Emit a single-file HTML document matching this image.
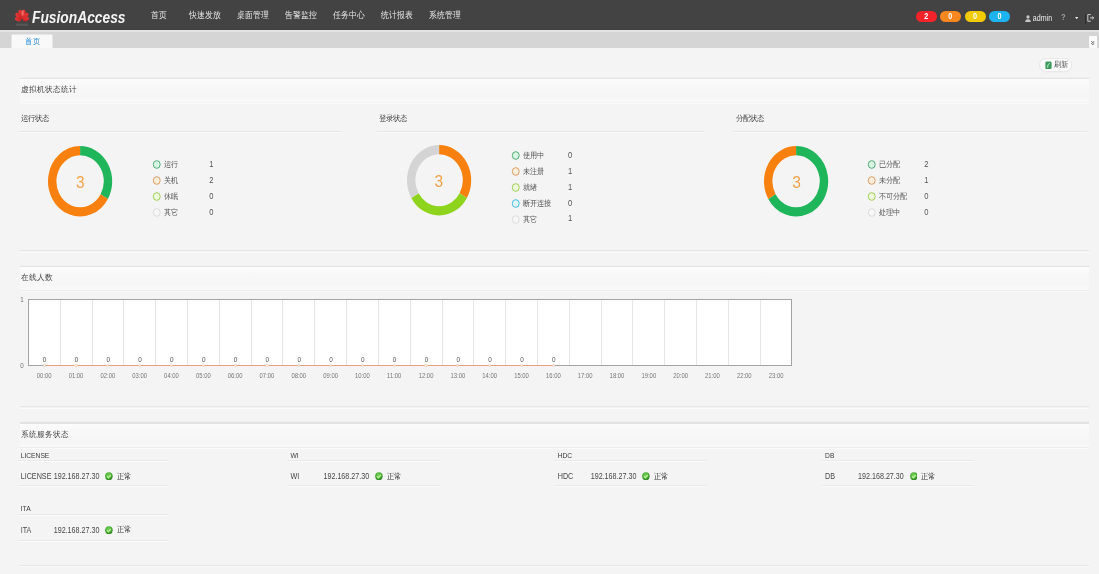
<!DOCTYPE html>
<html><head><meta charset="utf-8"><style>
html,body{margin:0;padding:0;width:1099px;height:574px;overflow:hidden;background:#f4f4f4;font-family:"Liberation Sans",sans-serif}
</style></head><body><div style="position:absolute;left:0;top:0;width:1099px;height:574px;overflow:hidden;will-change:transform;background:#f4f4f4">
<div style="position:absolute;left:0px;top:0px;width:1099px;height:30px;background:#434343"></div>
<div style="position:absolute;left:0px;top:30px;width:1099px;height:18px;background:#d5d5d5"></div>
<div style="position:absolute;left:0px;top:30px;width:1099px;height:1.5px;background:#e4e4e4"></div>
<div style="position:absolute;left:0px;top:48px;width:1099px;height:526px;background:#f4f4f4"></div>
<svg style="position:absolute;left:14.2px;top:8px" width="16" height="20" viewBox="0 0 16 20">
<defs><linearGradient id="lg" x1="0" y1="0" x2="1" y2="1"><stop offset="0" stop-color="#f04040"/><stop offset="1" stop-color="#c01c1c"/></linearGradient></defs>
<g fill="url(#lg)">
<ellipse cx="6.6" cy="6.2" rx="2.2" ry="4.6" transform="rotate(-10 6.6 6.2)"/>
<ellipse cx="9.4" cy="6.2" rx="2.2" ry="4.6" transform="rotate(10 9.4 6.2)"/>
<ellipse cx="4.6" cy="8.4" rx="2.1" ry="4.2" transform="rotate(-38 4.6 8.4)"/>
<ellipse cx="11.4" cy="8.4" rx="2.1" ry="4.2" transform="rotate(38 11.4 8.4)"/>
<ellipse cx="3.9" cy="11.3" rx="1.8" ry="3.2" transform="rotate(-68 3.9 11.3)"/>
<ellipse cx="12.1" cy="11.3" rx="1.8" ry="3.2" transform="rotate(68 12.1 11.3)"/>
</g>
<ellipse cx="8.6" cy="5" rx="1.2" ry="3" fill="#ff8a80" opacity="0.6"/>
<rect x="2.2" y="15.5" width="11.6" height="2.4" fill="#6e6a6a" opacity="0.5"/>
</svg>
<div style="position:absolute;left:32px;top:7.7px;height:20px;line-height:20px;font-size:13.8px;font-weight:bold;font-style:italic;color:#f4f4f4;transform:scaleY(1.15);transform-origin:0 50%">FusionAccess</div>
<div style="position:absolute;left:150.7px;top:6.0px;height:20px;line-height:20px;font-size:8.1px;color:#e8e8e8;white-space:nowrap;transform:scaleY(1.15);transform-origin:0 50%;">首页</div>
<div style="position:absolute;left:189.2px;top:6.0px;height:20px;line-height:20px;font-size:8.1px;color:#e8e8e8;white-space:nowrap;transform:scaleY(1.15);transform-origin:0 50%;">快速发放</div>
<div style="position:absolute;left:237.2px;top:6.0px;height:20px;line-height:20px;font-size:8.1px;color:#e8e8e8;white-space:nowrap;transform:scaleY(1.15);transform-origin:0 50%;">桌面管理</div>
<div style="position:absolute;left:285.2px;top:6.0px;height:20px;line-height:20px;font-size:8.1px;color:#e8e8e8;white-space:nowrap;transform:scaleY(1.15);transform-origin:0 50%;">告警监控</div>
<div style="position:absolute;left:332.7px;top:6.0px;height:20px;line-height:20px;font-size:8.1px;color:#e8e8e8;white-space:nowrap;transform:scaleY(1.15);transform-origin:0 50%;">任务中心</div>
<div style="position:absolute;left:380.7px;top:6.0px;height:20px;line-height:20px;font-size:8.1px;color:#e8e8e8;white-space:nowrap;transform:scaleY(1.15);transform-origin:0 50%;">统计报表</div>
<div style="position:absolute;left:428.7px;top:6.0px;height:20px;line-height:20px;font-size:8.1px;color:#e8e8e8;white-space:nowrap;transform:scaleY(1.15);transform-origin:0 50%;">系统管理</div>
<div style="position:absolute;left:915.5px;top:11.1px;width:21.5px;height:11px;border-radius:5.5px;background:#f5232a"></div>
<div style="position:absolute;left:926.25px;top:6.899999999999999px;height:20px;line-height:20px;font-size:7.2px;color:#fff;white-space:nowrap;transform:translateX(-50%) scaleY(1.15);transform-origin:0 50%;font-weight:bold">2</div>
<div style="position:absolute;left:940px;top:11.1px;width:20.5px;height:11px;border-radius:5.5px;background:#f7871f"></div>
<div style="position:absolute;left:950.25px;top:6.899999999999999px;height:20px;line-height:20px;font-size:7.2px;color:#fff;white-space:nowrap;transform:translateX(-50%) scaleY(1.15);transform-origin:0 50%;font-weight:bold">0</div>
<div style="position:absolute;left:964.5px;top:11.1px;width:21px;height:11px;border-radius:5.5px;background:#f2cb00"></div>
<div style="position:absolute;left:975.0px;top:6.899999999999999px;height:20px;line-height:20px;font-size:7.2px;color:#fff;white-space:nowrap;transform:translateX(-50%) scaleY(1.15);transform-origin:0 50%;font-weight:bold">0</div>
<div style="position:absolute;left:989px;top:11.1px;width:21px;height:11px;border-radius:5.5px;background:#1db3ee"></div>
<div style="position:absolute;left:999.5px;top:6.899999999999999px;height:20px;line-height:20px;font-size:7.2px;color:#fff;white-space:nowrap;transform:translateX(-50%) scaleY(1.15);transform-origin:0 50%;font-weight:bold">0</div>
<svg style="position:absolute;left:1024.8px;top:14.6px" width="6" height="7.4" viewBox="0 0 6 7.4">
<ellipse cx="3" cy="2" rx="1.6" ry="1.8" fill="#c8c8c8"/><path d="M0.2 7.2 C0.2 4.9 1.3 4.2 3 4.2 C4.7 4.2 5.8 4.9 5.8 7.2Z" fill="#c8c8c8"/></svg>
<div style="position:absolute;left:1032.8px;top:8.8px;height:20px;line-height:20px;font-size:7.1px;color:#ececec;white-space:nowrap;transform:scaleY(1.15);transform-origin:0 50%;">admin</div>
<div style="position:absolute;left:1061px;top:7.600000000000001px;height:20px;line-height:20px;font-size:7.6px;color:#9c9c9c;white-space:nowrap;transform:scaleY(1.15);transform-origin:0 50%;font-weight:bold">?</div>
<svg style="position:absolute;left:1075px;top:16.8px" width="3.4" height="2.4" viewBox="0 0 3.4 2.4"><path d="M0 0.1 H3.4 L1.7 2.3Z" fill="#e6e6e6"/></svg>
<div style="position:absolute;left:1085px;top:13.5px;width:0.8px;height:10.3px;background:#2e2e2e"></div>
<svg style="position:absolute;left:1087.4px;top:14px" width="8" height="8" viewBox="0 0 8 8">
<path d="M3.8 0.6 H0.8 V7.2 H3.8" fill="none" stroke="#cccccc" stroke-width="1"/>
<path d="M3 3.9 H6.6 M5.2 2.5 L6.8 3.9 L5.2 5.3" fill="none" stroke="#cccccc" stroke-width="1"/></svg>
<div style="position:absolute;left:11.4px;top:33.6px;width:41.2px;height:14.3px;background:#f9f9f9;border-radius:2px 2px 0 0;box-sizing:border-box;border:1px solid #e6e6e6;border-bottom:none"></div>
<div style="position:absolute;left:24.8px;top:31.6px;height:20px;line-height:20px;font-size:7.5px;color:#1f88d4;white-space:nowrap;transform:scaleY(1.1);transform-origin:0 50%;">首页</div>
<div style="position:absolute;left:1088.6px;top:36px;width:8px;height:11.8px;background:#fbfbfb;border-radius:1px"></div>
<svg style="position:absolute;left:1091px;top:40.8px" width="3.6" height="4.2" viewBox="0 0 3.6 4.2">
<path d="M0.3 0.3 L1.8 1.6 L3.3 0.3 M0.3 2.3 L1.8 3.7 L3.3 2.3" fill="none" stroke="#444" stroke-width="0.9"/></svg>
<div style="position:absolute;left:1039.3px;top:57.8px;width:32.9px;height:14.7px;box-sizing:border-box;background:#fcfcfc;border:0.8px solid #e8e8e8;border-radius:7.4px;box-shadow:0 0.5px 1px rgba(0,0,0,0.04)"></div>
<svg style="position:absolute;left:1045px;top:60.6px" width="7" height="8.4" viewBox="0 0 7 8.4">
<path d="M1.2 0.6 H5.2 Q6.6 0.6 6.6 2 V6.8 Q6.6 8.2 5.2 8.2 H1.8 Q0.4 8.2 0.4 6.8 V1.6Z" fill="#3d9a5c"/>
<path d="M4.8 2.2 Q2.2 3.2 2.6 6.6" fill="none" stroke="#b8f0c8" stroke-width="1"/></svg>
<div style="position:absolute;left:1053.6px;top:54.599999999999994px;height:20px;line-height:20px;font-size:7.3px;color:#505050;white-space:nowrap;transform:scaleY(1.1);transform-origin:0 50%;">刷新</div>
<div style="position:absolute;left:19.5px;top:77px;width:1069.5px;height:1px;background:#f0f0f0"></div>
<div style="position:absolute;left:19.5px;top:78px;width:1069.5px;height:1.4px;background:#e3e3e3"></div>
<div style="position:absolute;left:19.5px;top:79.4px;width:1069.5px;height:23.1px;background:linear-gradient(#fcfcfc,#f8f8f8 30%,#f6f6f6 75%,#f9f9f9)"></div>
<div style="position:absolute;left:19.5px;top:102.5px;width:1069.5px;height:0.9px;background:#ececec"></div>
<div style="position:absolute;left:19.5px;top:103.4px;width:1069.5px;height:0.8px;background:#fafafa"></div>
<div style="position:absolute;left:19.5px;top:250.2px;width:1069.5px;height:1.3px;background:#e6e6e6"></div>
<div style="position:absolute;left:19.5px;top:251.6px;width:1069.5px;height:1.0px;background:#fafafa"></div>
<div style="position:absolute;left:20.5px;top:80.3px;height:20px;line-height:20px;font-size:8.0px;color:#444;white-space:nowrap;transform:scaleY(1.05);transform-origin:0 50%;">虚拟机状态统计</div>
<div style="position:absolute;left:19.5px;top:264.5px;width:1069.5px;height:1px;background:#f0f0f0"></div>
<div style="position:absolute;left:19.5px;top:265.5px;width:1069.5px;height:1.4px;background:#e3e3e3"></div>
<div style="position:absolute;left:19.5px;top:266.9px;width:1069.5px;height:23.1px;background:linear-gradient(#fcfcfc,#f8f8f8 30%,#f6f6f6 75%,#f9f9f9)"></div>
<div style="position:absolute;left:19.5px;top:290px;width:1069.5px;height:0.9px;background:#ececec"></div>
<div style="position:absolute;left:19.5px;top:290.9px;width:1069.5px;height:0.8px;background:#fafafa"></div>
<div style="position:absolute;left:19.5px;top:406.2px;width:1069.5px;height:1.3px;background:#e6e6e6"></div>
<div style="position:absolute;left:19.5px;top:407.59999999999997px;width:1069.5px;height:1.0px;background:#fafafa"></div>
<div style="position:absolute;left:20.5px;top:268.0px;height:20px;line-height:20px;font-size:8.0px;color:#444;white-space:nowrap;transform:scaleY(1.05);transform-origin:0 50%;">在线人数</div>
<div style="position:absolute;left:19.5px;top:421.2px;width:1069.5px;height:1px;background:#f0f0f0"></div>
<div style="position:absolute;left:19.5px;top:422.2px;width:1069.5px;height:1.4px;background:#e3e3e3"></div>
<div style="position:absolute;left:19.5px;top:423.59999999999997px;width:1069.5px;height:23.400000000000013px;background:linear-gradient(#fcfcfc,#f8f8f8 30%,#f6f6f6 75%,#f9f9f9)"></div>
<div style="position:absolute;left:19.5px;top:447px;width:1069.5px;height:0.9px;background:#ececec"></div>
<div style="position:absolute;left:19.5px;top:447.9px;width:1069.5px;height:0.8px;background:#fafafa"></div>
<div style="position:absolute;left:19.5px;top:565px;width:1069.5px;height:1.3px;background:#e6e6e6"></div>
<div style="position:absolute;left:19.5px;top:566.4px;width:1069.5px;height:1.0px;background:#fafafa"></div>
<div style="position:absolute;left:20.5px;top:424.9px;height:20px;line-height:20px;font-size:8.0px;color:#444;white-space:nowrap;transform:scaleY(1.05);transform-origin:0 50%;">系统服务状态</div>
<div style="position:absolute;left:20.5px;top:109.0px;height:20px;line-height:20px;font-size:7.1px;color:#444;white-space:nowrap;transform:scaleY(1.08);transform-origin:0 50%;">运行状态</div>
<div style="position:absolute;left:18.2px;top:130.6px;width:324px;height:0.9px;background:#e6e6e6"></div>
<div style="position:absolute;left:18.2px;top:131.5px;width:324px;height:0.7px;background:#fafafa"></div>
<div style="position:absolute;left:378.90000000000003px;top:109.0px;height:20px;line-height:20px;font-size:7.1px;color:#444;white-space:nowrap;transform:scaleY(1.08);transform-origin:0 50%;">登录状态</div>
<div style="position:absolute;left:376.6px;top:130.6px;width:328px;height:0.9px;background:#e6e6e6"></div>
<div style="position:absolute;left:376.6px;top:131.5px;width:328px;height:0.7px;background:#fafafa"></div>
<div style="position:absolute;left:736.1999999999999px;top:109.0px;height:20px;line-height:20px;font-size:7.1px;color:#444;white-space:nowrap;transform:scaleY(1.08);transform-origin:0 50%;">分配状态</div>
<div style="position:absolute;left:733.9px;top:130.6px;width:353px;height:0.9px;background:#e6e6e6"></div>
<div style="position:absolute;left:733.9px;top:131.5px;width:353px;height:0.7px;background:#fafafa"></div>
<svg style="position:absolute;left:47.199999999999996px;top:144.89999999999998px" width="66.2" height="72.6" viewBox="-33.1 -33.1 66.2 66.2" preserveAspectRatio="none"><path d="M0.000 -27.900 A27.900000000000002 27.900000000000002 0 0 1 24.162 13.950" fill="none" stroke="#1fb55a" stroke-width="8.4"/><path d="M24.162 13.950 A27.900000000000002 27.900000000000002 0 1 1 -0.000 -27.900" fill="none" stroke="#f7800f" stroke-width="8.4"/></svg>
<div style="position:absolute;left:80.3px;top:171.7px;height:20px;line-height:20px;font-size:15.5px;color:#f2a24c;white-space:nowrap;transform:translateX(-50%) scaleY(1.1);transform-origin:0 50%;">3</div>
<svg style="position:absolute;left:405.59999999999997px;top:143.89999999999998px" width="66.2" height="72.6" viewBox="-33.1 -33.1 66.2 66.2" preserveAspectRatio="none"><path d="M0.000 -27.900 A27.900000000000002 27.900000000000002 0 0 1 24.162 13.950" fill="none" stroke="#f7800f" stroke-width="8.4"/><path d="M24.162 13.950 A27.900000000000002 27.900000000000002 0 0 1 -24.162 13.950" fill="none" stroke="#8fd41c" stroke-width="8.4"/><path d="M-24.162 13.950 A27.900000000000002 27.900000000000002 0 0 1 -0.000 -27.900" fill="none" stroke="#d4d4d4" stroke-width="8.4"/></svg>
<div style="position:absolute;left:438.7px;top:170.7px;height:20px;line-height:20px;font-size:15.5px;color:#f2a24c;white-space:nowrap;transform:translateX(-50%) scaleY(1.1);transform-origin:0 50%;">3</div>
<svg style="position:absolute;left:763.4px;top:144.8px" width="66.2" height="72.6" viewBox="-33.1 -33.1 66.2 66.2" preserveAspectRatio="none"><path d="M0.000 -27.900 A27.900000000000002 27.900000000000002 0 1 1 -24.162 13.950" fill="none" stroke="#1fb55a" stroke-width="8.4"/><path d="M-24.162 13.950 A27.900000000000002 27.900000000000002 0 0 1 -0.000 -27.900" fill="none" stroke="#f7800f" stroke-width="8.4"/></svg>
<div style="position:absolute;left:796.5px;top:171.6px;height:20px;line-height:20px;font-size:15.5px;color:#f2a24c;white-space:nowrap;transform:translateX(-50%) scaleY(1.1);transform-origin:0 50%;">3</div>
<svg style="position:absolute;left:151.9px;top:158.8px;overflow:visible" width="10" height="11" viewBox="0 0 10 11"><ellipse cx="4.75" cy="5.5" rx="3.45" ry="3.85" fill="#d9f5e4" stroke="#4aa872" stroke-width="0.95"/></svg>
<div style="position:absolute;left:163.70000000000002px;top:154.8px;height:20px;line-height:20px;font-size:7.1px;color:#555;white-space:nowrap;transform:scaleY(1.12);transform-origin:0 50%;">运行</div>
<div style="position:absolute;left:209.2px;top:154.70000000000002px;height:20px;line-height:20px;font-size:7.6px;color:#555;white-space:nowrap;transform:scaleY(1.12);transform-origin:0 50%;">1</div>
<svg style="position:absolute;left:151.9px;top:174.8px;overflow:visible" width="10" height="11" viewBox="0 0 10 11"><ellipse cx="4.75" cy="5.5" rx="3.45" ry="3.85" fill="#fbeedd" stroke="#d99a5e" stroke-width="0.95"/></svg>
<div style="position:absolute;left:163.70000000000002px;top:170.8px;height:20px;line-height:20px;font-size:7.1px;color:#555;white-space:nowrap;transform:scaleY(1.12);transform-origin:0 50%;">关机</div>
<div style="position:absolute;left:209.2px;top:170.70000000000002px;height:20px;line-height:20px;font-size:7.6px;color:#555;white-space:nowrap;transform:scaleY(1.12);transform-origin:0 50%;">2</div>
<svg style="position:absolute;left:151.9px;top:190.7px;overflow:visible" width="10" height="11" viewBox="0 0 10 11"><ellipse cx="4.75" cy="5.5" rx="3.45" ry="3.85" fill="#eef8dc" stroke="#9ccc50" stroke-width="0.95"/></svg>
<div style="position:absolute;left:163.70000000000002px;top:186.7px;height:20px;line-height:20px;font-size:7.1px;color:#555;white-space:nowrap;transform:scaleY(1.12);transform-origin:0 50%;">休眠</div>
<div style="position:absolute;left:209.2px;top:186.6px;height:20px;line-height:20px;font-size:7.6px;color:#555;white-space:nowrap;transform:scaleY(1.12);transform-origin:0 50%;">0</div>
<svg style="position:absolute;left:151.9px;top:207.0px;overflow:visible" width="10" height="11" viewBox="0 0 10 11"><ellipse cx="4.75" cy="5.5" rx="3.45" ry="3.85" fill="#f7f7f7" stroke="#dadada" stroke-width="0.95"/></svg>
<div style="position:absolute;left:163.70000000000002px;top:203.0px;height:20px;line-height:20px;font-size:7.1px;color:#555;white-space:nowrap;transform:scaleY(1.12);transform-origin:0 50%;">其它</div>
<div style="position:absolute;left:209.2px;top:202.9px;height:20px;line-height:20px;font-size:7.6px;color:#555;white-space:nowrap;transform:scaleY(1.12);transform-origin:0 50%;">0</div>
<svg style="position:absolute;left:510.8px;top:149.9px;overflow:visible" width="10" height="11" viewBox="0 0 10 11"><ellipse cx="4.75" cy="5.5" rx="3.45" ry="3.85" fill="#d9f5e4" stroke="#4aa872" stroke-width="0.95"/></svg>
<div style="position:absolute;left:522.6px;top:145.9px;height:20px;line-height:20px;font-size:7.1px;color:#555;white-space:nowrap;transform:scaleY(1.12);transform-origin:0 50%;">使用中</div>
<div style="position:absolute;left:568.1px;top:145.8px;height:20px;line-height:20px;font-size:7.6px;color:#555;white-space:nowrap;transform:scaleY(1.12);transform-origin:0 50%;">0</div>
<svg style="position:absolute;left:510.8px;top:165.9px;overflow:visible" width="10" height="11" viewBox="0 0 10 11"><ellipse cx="4.75" cy="5.5" rx="3.45" ry="3.85" fill="#fbeedd" stroke="#d99a5e" stroke-width="0.95"/></svg>
<div style="position:absolute;left:522.6px;top:161.9px;height:20px;line-height:20px;font-size:7.1px;color:#555;white-space:nowrap;transform:scaleY(1.12);transform-origin:0 50%;">未注册</div>
<div style="position:absolute;left:568.1px;top:161.8px;height:20px;line-height:20px;font-size:7.6px;color:#555;white-space:nowrap;transform:scaleY(1.12);transform-origin:0 50%;">1</div>
<svg style="position:absolute;left:510.8px;top:181.8px;overflow:visible" width="10" height="11" viewBox="0 0 10 11"><ellipse cx="4.75" cy="5.5" rx="3.45" ry="3.85" fill="#eef8dc" stroke="#9ccc50" stroke-width="0.95"/></svg>
<div style="position:absolute;left:522.6px;top:177.8px;height:20px;line-height:20px;font-size:7.1px;color:#555;white-space:nowrap;transform:scaleY(1.12);transform-origin:0 50%;">就绪</div>
<div style="position:absolute;left:568.1px;top:177.70000000000002px;height:20px;line-height:20px;font-size:7.6px;color:#555;white-space:nowrap;transform:scaleY(1.12);transform-origin:0 50%;">1</div>
<svg style="position:absolute;left:510.8px;top:197.6px;overflow:visible" width="10" height="11" viewBox="0 0 10 11"><ellipse cx="4.75" cy="5.5" rx="3.45" ry="3.85" fill="#dff4fb" stroke="#3cb8dc" stroke-width="0.95"/></svg>
<div style="position:absolute;left:522.6px;top:193.6px;height:20px;line-height:20px;font-size:7.1px;color:#555;white-space:nowrap;transform:scaleY(1.12);transform-origin:0 50%;">断开连接</div>
<div style="position:absolute;left:568.1px;top:193.5px;height:20px;line-height:20px;font-size:7.6px;color:#555;white-space:nowrap;transform:scaleY(1.12);transform-origin:0 50%;">0</div>
<svg style="position:absolute;left:510.8px;top:213.5px;overflow:visible" width="10" height="11" viewBox="0 0 10 11"><ellipse cx="4.75" cy="5.5" rx="3.45" ry="3.85" fill="#f7f7f7" stroke="#dadada" stroke-width="0.95"/></svg>
<div style="position:absolute;left:522.6px;top:209.5px;height:20px;line-height:20px;font-size:7.1px;color:#555;white-space:nowrap;transform:scaleY(1.12);transform-origin:0 50%;">其它</div>
<div style="position:absolute;left:568.1px;top:209.4px;height:20px;line-height:20px;font-size:7.6px;color:#555;white-space:nowrap;transform:scaleY(1.12);transform-origin:0 50%;">1</div>
<svg style="position:absolute;left:866.9px;top:159.0px;overflow:visible" width="10" height="11" viewBox="0 0 10 11"><ellipse cx="4.75" cy="5.5" rx="3.45" ry="3.85" fill="#d9f5e4" stroke="#4aa872" stroke-width="0.95"/></svg>
<div style="position:absolute;left:878.6999999999999px;top:155.0px;height:20px;line-height:20px;font-size:7.1px;color:#555;white-space:nowrap;transform:scaleY(1.12);transform-origin:0 50%;">已分配</div>
<div style="position:absolute;left:924.1999999999999px;top:154.9px;height:20px;line-height:20px;font-size:7.6px;color:#555;white-space:nowrap;transform:scaleY(1.12);transform-origin:0 50%;">2</div>
<svg style="position:absolute;left:866.9px;top:174.9px;overflow:visible" width="10" height="11" viewBox="0 0 10 11"><ellipse cx="4.75" cy="5.5" rx="3.45" ry="3.85" fill="#fbeedd" stroke="#d99a5e" stroke-width="0.95"/></svg>
<div style="position:absolute;left:878.6999999999999px;top:170.9px;height:20px;line-height:20px;font-size:7.1px;color:#555;white-space:nowrap;transform:scaleY(1.12);transform-origin:0 50%;">未分配</div>
<div style="position:absolute;left:924.1999999999999px;top:170.8px;height:20px;line-height:20px;font-size:7.6px;color:#555;white-space:nowrap;transform:scaleY(1.12);transform-origin:0 50%;">1</div>
<svg style="position:absolute;left:866.9px;top:190.8px;overflow:visible" width="10" height="11" viewBox="0 0 10 11"><ellipse cx="4.75" cy="5.5" rx="3.45" ry="3.85" fill="#eef8dc" stroke="#9ccc50" stroke-width="0.95"/></svg>
<div style="position:absolute;left:878.6999999999999px;top:186.8px;height:20px;line-height:20px;font-size:7.1px;color:#555;white-space:nowrap;transform:scaleY(1.12);transform-origin:0 50%;">不可分配</div>
<div style="position:absolute;left:924.1999999999999px;top:186.70000000000002px;height:20px;line-height:20px;font-size:7.6px;color:#555;white-space:nowrap;transform:scaleY(1.12);transform-origin:0 50%;">0</div>
<svg style="position:absolute;left:866.9px;top:207.1px;overflow:visible" width="10" height="11" viewBox="0 0 10 11"><ellipse cx="4.75" cy="5.5" rx="3.45" ry="3.85" fill="#f7f7f7" stroke="#dadada" stroke-width="0.95"/></svg>
<div style="position:absolute;left:878.6999999999999px;top:203.1px;height:20px;line-height:20px;font-size:7.1px;color:#555;white-space:nowrap;transform:scaleY(1.12);transform-origin:0 50%;">处理中</div>
<div style="position:absolute;left:924.1999999999999px;top:203.0px;height:20px;line-height:20px;font-size:7.6px;color:#555;white-space:nowrap;transform:scaleY(1.12);transform-origin:0 50%;">0</div>
<div style="position:absolute;left:28.3px;top:298.7px;width:763.7px;height:67.30000000000001px;background:#fff;box-sizing:border-box;border:1.3px solid #a4a4a4"></div>
<div style="position:absolute;left:59.72083333333334px;top:300.0px;width:0.8px;height:64.70000000000002px;background:#e6e6e6"></div>
<div style="position:absolute;left:91.54166666666667px;top:300.0px;width:0.8px;height:64.70000000000002px;background:#e6e6e6"></div>
<div style="position:absolute;left:123.3625px;top:300.0px;width:0.8px;height:64.70000000000002px;background:#e6e6e6"></div>
<div style="position:absolute;left:155.18333333333334px;top:300.0px;width:0.8px;height:64.70000000000002px;background:#e6e6e6"></div>
<div style="position:absolute;left:187.0041666666667px;top:300.0px;width:0.8px;height:64.70000000000002px;background:#e6e6e6"></div>
<div style="position:absolute;left:218.82500000000002px;top:300.0px;width:0.8px;height:64.70000000000002px;background:#e6e6e6"></div>
<div style="position:absolute;left:250.64583333333337px;top:300.0px;width:0.8px;height:64.70000000000002px;background:#e6e6e6"></div>
<div style="position:absolute;left:282.4666666666667px;top:300.0px;width:0.8px;height:64.70000000000002px;background:#e6e6e6"></div>
<div style="position:absolute;left:314.2875000000001px;top:300.0px;width:0.8px;height:64.70000000000002px;background:#e6e6e6"></div>
<div style="position:absolute;left:346.1083333333334px;top:300.0px;width:0.8px;height:64.70000000000002px;background:#e6e6e6"></div>
<div style="position:absolute;left:377.92916666666673px;top:300.0px;width:0.8px;height:64.70000000000002px;background:#e6e6e6"></div>
<div style="position:absolute;left:409.75000000000006px;top:300.0px;width:0.8px;height:64.70000000000002px;background:#e6e6e6"></div>
<div style="position:absolute;left:441.5708333333334px;top:300.0px;width:0.8px;height:64.70000000000002px;background:#e6e6e6"></div>
<div style="position:absolute;left:473.39166666666677px;top:300.0px;width:0.8px;height:64.70000000000002px;background:#e6e6e6"></div>
<div style="position:absolute;left:505.2125000000001px;top:300.0px;width:0.8px;height:64.70000000000002px;background:#e6e6e6"></div>
<div style="position:absolute;left:537.0333333333334px;top:300.0px;width:0.8px;height:64.70000000000002px;background:#e6e6e6"></div>
<div style="position:absolute;left:568.8541666666667px;top:300.0px;width:0.8px;height:64.70000000000002px;background:#e6e6e6"></div>
<div style="position:absolute;left:600.6750000000001px;top:300.0px;width:0.8px;height:64.70000000000002px;background:#e6e6e6"></div>
<div style="position:absolute;left:632.4958333333334px;top:300.0px;width:0.8px;height:64.70000000000002px;background:#e6e6e6"></div>
<div style="position:absolute;left:664.3166666666667px;top:300.0px;width:0.8px;height:64.70000000000002px;background:#e6e6e6"></div>
<div style="position:absolute;left:696.1375px;top:300.0px;width:0.8px;height:64.70000000000002px;background:#e6e6e6"></div>
<div style="position:absolute;left:727.9583333333334px;top:300.0px;width:0.8px;height:64.70000000000002px;background:#e6e6e6"></div>
<div style="position:absolute;left:759.7791666666667px;top:300.0px;width:0.8px;height:64.70000000000002px;background:#e6e6e6"></div>
<div style="position:absolute;left:20.3px;top:289.8px;height:20px;line-height:20px;font-size:6.2px;color:#707070;white-space:nowrap;transform:scaleY(1.15);transform-origin:0 50%;">1</div>
<div style="position:absolute;left:20.3px;top:356.2px;height:20px;line-height:20px;font-size:6.2px;color:#707070;white-space:nowrap;transform:scaleY(1.15);transform-origin:0 50%;">0</div>
<div style="position:absolute;left:44.21041666666667px;top:364.9px;width:509.1333333333333px;height:1.0px;background:#eaa27c"></div>
<div style="position:absolute;left:42.610416666666666px;top:363.84999999999997px;width:3.2px;height:3.2px;box-sizing:border-box;border:0.7px solid #f2cdb4;border-radius:50%;background:#fdf8f4"></div>
<div style="position:absolute;left:44.610416666666666px;top:349.7px;height:20px;line-height:20px;font-size:6.4px;color:#555;white-space:nowrap;transform:translateX(-50%) scaleY(1.15);transform-origin:0 50%;">0</div>
<div style="position:absolute;left:74.43125px;top:363.84999999999997px;width:3.2px;height:3.2px;box-sizing:border-box;border:0.7px solid #f2cdb4;border-radius:50%;background:#fdf8f4"></div>
<div style="position:absolute;left:76.43125px;top:349.7px;height:20px;line-height:20px;font-size:6.4px;color:#555;white-space:nowrap;transform:translateX(-50%) scaleY(1.15);transform-origin:0 50%;">0</div>
<div style="position:absolute;left:106.25208333333335px;top:363.84999999999997px;width:3.2px;height:3.2px;box-sizing:border-box;border:0.7px solid #f2cdb4;border-radius:50%;background:#fdf8f4"></div>
<div style="position:absolute;left:108.25208333333335px;top:349.7px;height:20px;line-height:20px;font-size:6.4px;color:#555;white-space:nowrap;transform:translateX(-50%) scaleY(1.15);transform-origin:0 50%;">0</div>
<div style="position:absolute;left:138.07291666666669px;top:363.84999999999997px;width:3.2px;height:3.2px;box-sizing:border-box;border:0.7px solid #f2cdb4;border-radius:50%;background:#fdf8f4"></div>
<div style="position:absolute;left:140.07291666666669px;top:349.7px;height:20px;line-height:20px;font-size:6.4px;color:#555;white-space:nowrap;transform:translateX(-50%) scaleY(1.15);transform-origin:0 50%;">0</div>
<div style="position:absolute;left:169.89375000000004px;top:363.84999999999997px;width:3.2px;height:3.2px;box-sizing:border-box;border:0.7px solid #f2cdb4;border-radius:50%;background:#fdf8f4"></div>
<div style="position:absolute;left:171.89375000000004px;top:349.7px;height:20px;line-height:20px;font-size:6.4px;color:#555;white-space:nowrap;transform:translateX(-50%) scaleY(1.15);transform-origin:0 50%;">0</div>
<div style="position:absolute;left:201.71458333333337px;top:363.84999999999997px;width:3.2px;height:3.2px;box-sizing:border-box;border:0.7px solid #f2cdb4;border-radius:50%;background:#fdf8f4"></div>
<div style="position:absolute;left:203.71458333333337px;top:349.7px;height:20px;line-height:20px;font-size:6.4px;color:#555;white-space:nowrap;transform:translateX(-50%) scaleY(1.15);transform-origin:0 50%;">0</div>
<div style="position:absolute;left:233.5354166666667px;top:363.84999999999997px;width:3.2px;height:3.2px;box-sizing:border-box;border:0.7px solid #f2cdb4;border-radius:50%;background:#fdf8f4"></div>
<div style="position:absolute;left:235.5354166666667px;top:349.7px;height:20px;line-height:20px;font-size:6.4px;color:#555;white-space:nowrap;transform:translateX(-50%) scaleY(1.15);transform-origin:0 50%;">0</div>
<div style="position:absolute;left:265.35625px;top:363.84999999999997px;width:3.2px;height:3.2px;box-sizing:border-box;border:0.7px solid #f2cdb4;border-radius:50%;background:#fdf8f4"></div>
<div style="position:absolute;left:267.35625px;top:349.7px;height:20px;line-height:20px;font-size:6.4px;color:#555;white-space:nowrap;transform:translateX(-50%) scaleY(1.15);transform-origin:0 50%;">0</div>
<div style="position:absolute;left:297.17708333333337px;top:363.84999999999997px;width:3.2px;height:3.2px;box-sizing:border-box;border:0.7px solid #f2cdb4;border-radius:50%;background:#fdf8f4"></div>
<div style="position:absolute;left:299.17708333333337px;top:349.7px;height:20px;line-height:20px;font-size:6.4px;color:#555;white-space:nowrap;transform:translateX(-50%) scaleY(1.15);transform-origin:0 50%;">0</div>
<div style="position:absolute;left:328.9979166666667px;top:363.84999999999997px;width:3.2px;height:3.2px;box-sizing:border-box;border:0.7px solid #f2cdb4;border-radius:50%;background:#fdf8f4"></div>
<div style="position:absolute;left:330.9979166666667px;top:349.7px;height:20px;line-height:20px;font-size:6.4px;color:#555;white-space:nowrap;transform:translateX(-50%) scaleY(1.15);transform-origin:0 50%;">0</div>
<div style="position:absolute;left:360.81875px;top:363.84999999999997px;width:3.2px;height:3.2px;box-sizing:border-box;border:0.7px solid #f2cdb4;border-radius:50%;background:#fdf8f4"></div>
<div style="position:absolute;left:362.81875px;top:349.7px;height:20px;line-height:20px;font-size:6.4px;color:#555;white-space:nowrap;transform:translateX(-50%) scaleY(1.15);transform-origin:0 50%;">0</div>
<div style="position:absolute;left:392.63958333333335px;top:363.84999999999997px;width:3.2px;height:3.2px;box-sizing:border-box;border:0.7px solid #f2cdb4;border-radius:50%;background:#fdf8f4"></div>
<div style="position:absolute;left:394.63958333333335px;top:349.7px;height:20px;line-height:20px;font-size:6.4px;color:#555;white-space:nowrap;transform:translateX(-50%) scaleY(1.15);transform-origin:0 50%;">0</div>
<div style="position:absolute;left:424.4604166666667px;top:363.84999999999997px;width:3.2px;height:3.2px;box-sizing:border-box;border:0.7px solid #f2cdb4;border-radius:50%;background:#fdf8f4"></div>
<div style="position:absolute;left:426.4604166666667px;top:349.7px;height:20px;line-height:20px;font-size:6.4px;color:#555;white-space:nowrap;transform:translateX(-50%) scaleY(1.15);transform-origin:0 50%;">0</div>
<div style="position:absolute;left:456.28125000000006px;top:363.84999999999997px;width:3.2px;height:3.2px;box-sizing:border-box;border:0.7px solid #f2cdb4;border-radius:50%;background:#fdf8f4"></div>
<div style="position:absolute;left:458.28125000000006px;top:349.7px;height:20px;line-height:20px;font-size:6.4px;color:#555;white-space:nowrap;transform:translateX(-50%) scaleY(1.15);transform-origin:0 50%;">0</div>
<div style="position:absolute;left:488.1020833333334px;top:363.84999999999997px;width:3.2px;height:3.2px;box-sizing:border-box;border:0.7px solid #f2cdb4;border-radius:50%;background:#fdf8f4"></div>
<div style="position:absolute;left:490.1020833333334px;top:349.7px;height:20px;line-height:20px;font-size:6.4px;color:#555;white-space:nowrap;transform:translateX(-50%) scaleY(1.15);transform-origin:0 50%;">0</div>
<div style="position:absolute;left:519.9229166666667px;top:363.84999999999997px;width:3.2px;height:3.2px;box-sizing:border-box;border:0.7px solid #f2cdb4;border-radius:50%;background:#fdf8f4"></div>
<div style="position:absolute;left:521.9229166666667px;top:349.7px;height:20px;line-height:20px;font-size:6.4px;color:#555;white-space:nowrap;transform:translateX(-50%) scaleY(1.15);transform-origin:0 50%;">0</div>
<div style="position:absolute;left:551.74375px;top:363.84999999999997px;width:3.2px;height:3.2px;box-sizing:border-box;border:0.7px solid #f2cdb4;border-radius:50%;background:#fdf8f4"></div>
<div style="position:absolute;left:553.74375px;top:349.7px;height:20px;line-height:20px;font-size:6.4px;color:#555;white-space:nowrap;transform:translateX(-50%) scaleY(1.15);transform-origin:0 50%;">0</div>
<div style="position:absolute;left:44.21041666666667px;top:366.2px;height:20px;line-height:20px;font-size:5.9px;color:#777;white-space:nowrap;transform:translateX(-50%) scaleY(1.18);transform-origin:0 50%;">00:00</div>
<div style="position:absolute;left:76.03125px;top:366.2px;height:20px;line-height:20px;font-size:5.9px;color:#777;white-space:nowrap;transform:translateX(-50%) scaleY(1.18);transform-origin:0 50%;">01:00</div>
<div style="position:absolute;left:107.85208333333334px;top:366.2px;height:20px;line-height:20px;font-size:5.9px;color:#777;white-space:nowrap;transform:translateX(-50%) scaleY(1.18);transform-origin:0 50%;">02:00</div>
<div style="position:absolute;left:139.67291666666668px;top:366.2px;height:20px;line-height:20px;font-size:5.9px;color:#777;white-space:nowrap;transform:translateX(-50%) scaleY(1.18);transform-origin:0 50%;">03:00</div>
<div style="position:absolute;left:171.49375000000003px;top:366.2px;height:20px;line-height:20px;font-size:5.9px;color:#777;white-space:nowrap;transform:translateX(-50%) scaleY(1.18);transform-origin:0 50%;">04:00</div>
<div style="position:absolute;left:203.31458333333336px;top:366.2px;height:20px;line-height:20px;font-size:5.9px;color:#777;white-space:nowrap;transform:translateX(-50%) scaleY(1.18);transform-origin:0 50%;">05:00</div>
<div style="position:absolute;left:235.13541666666669px;top:366.2px;height:20px;line-height:20px;font-size:5.9px;color:#777;white-space:nowrap;transform:translateX(-50%) scaleY(1.18);transform-origin:0 50%;">06:00</div>
<div style="position:absolute;left:266.95625px;top:366.2px;height:20px;line-height:20px;font-size:5.9px;color:#777;white-space:nowrap;transform:translateX(-50%) scaleY(1.18);transform-origin:0 50%;">07:00</div>
<div style="position:absolute;left:298.7770833333334px;top:366.2px;height:20px;line-height:20px;font-size:5.9px;color:#777;white-space:nowrap;transform:translateX(-50%) scaleY(1.18);transform-origin:0 50%;">08:00</div>
<div style="position:absolute;left:330.5979166666667px;top:366.2px;height:20px;line-height:20px;font-size:5.9px;color:#777;white-space:nowrap;transform:translateX(-50%) scaleY(1.18);transform-origin:0 50%;">09:00</div>
<div style="position:absolute;left:362.41875000000005px;top:366.2px;height:20px;line-height:20px;font-size:5.9px;color:#777;white-space:nowrap;transform:translateX(-50%) scaleY(1.18);transform-origin:0 50%;">10:00</div>
<div style="position:absolute;left:394.23958333333337px;top:366.2px;height:20px;line-height:20px;font-size:5.9px;color:#777;white-space:nowrap;transform:translateX(-50%) scaleY(1.18);transform-origin:0 50%;">11:00</div>
<div style="position:absolute;left:426.0604166666667px;top:366.2px;height:20px;line-height:20px;font-size:5.9px;color:#777;white-space:nowrap;transform:translateX(-50%) scaleY(1.18);transform-origin:0 50%;">12:00</div>
<div style="position:absolute;left:457.8812500000001px;top:366.2px;height:20px;line-height:20px;font-size:5.9px;color:#777;white-space:nowrap;transform:translateX(-50%) scaleY(1.18);transform-origin:0 50%;">13:00</div>
<div style="position:absolute;left:489.7020833333334px;top:366.2px;height:20px;line-height:20px;font-size:5.9px;color:#777;white-space:nowrap;transform:translateX(-50%) scaleY(1.18);transform-origin:0 50%;">14:00</div>
<div style="position:absolute;left:521.5229166666667px;top:366.2px;height:20px;line-height:20px;font-size:5.9px;color:#777;white-space:nowrap;transform:translateX(-50%) scaleY(1.18);transform-origin:0 50%;">15:00</div>
<div style="position:absolute;left:553.34375px;top:366.2px;height:20px;line-height:20px;font-size:5.9px;color:#777;white-space:nowrap;transform:translateX(-50%) scaleY(1.18);transform-origin:0 50%;">16:00</div>
<div style="position:absolute;left:585.1645833333333px;top:366.2px;height:20px;line-height:20px;font-size:5.9px;color:#777;white-space:nowrap;transform:translateX(-50%) scaleY(1.18);transform-origin:0 50%;">17:00</div>
<div style="position:absolute;left:616.9854166666667px;top:366.2px;height:20px;line-height:20px;font-size:5.9px;color:#777;white-space:nowrap;transform:translateX(-50%) scaleY(1.18);transform-origin:0 50%;">18:00</div>
<div style="position:absolute;left:648.80625px;top:366.2px;height:20px;line-height:20px;font-size:5.9px;color:#777;white-space:nowrap;transform:translateX(-50%) scaleY(1.18);transform-origin:0 50%;">19:00</div>
<div style="position:absolute;left:680.6270833333333px;top:366.2px;height:20px;line-height:20px;font-size:5.9px;color:#777;white-space:nowrap;transform:translateX(-50%) scaleY(1.18);transform-origin:0 50%;">20:00</div>
<div style="position:absolute;left:712.4479166666667px;top:366.2px;height:20px;line-height:20px;font-size:5.9px;color:#777;white-space:nowrap;transform:translateX(-50%) scaleY(1.18);transform-origin:0 50%;">21:00</div>
<div style="position:absolute;left:744.2687500000001px;top:366.2px;height:20px;line-height:20px;font-size:5.9px;color:#777;white-space:nowrap;transform:translateX(-50%) scaleY(1.18);transform-origin:0 50%;">22:00</div>
<div style="position:absolute;left:776.0895833333334px;top:366.2px;height:20px;line-height:20px;font-size:5.9px;color:#777;white-space:nowrap;transform:translateX(-50%) scaleY(1.18);transform-origin:0 50%;">23:00</div>
<div style="position:absolute;left:20.7px;top:445.6px;height:20px;line-height:20px;font-size:6.7px;color:#3a3a3a;white-space:nowrap;transform:scaleY(1.18);transform-origin:0 50%;">LICENSE</div>
<div style="position:absolute;left:17.7px;top:459.6px;width:150px;height:0.9px;background:#e9e9e9"></div>
<div style="position:absolute;left:17.7px;top:460.5px;width:150px;height:0.6px;background:#fafafa"></div>
<div style="position:absolute;left:20.7px;top:467.0px;height:20px;line-height:20px;font-size:7.2px;color:#484848;white-space:nowrap;transform:scaleY(1.15);transform-origin:0 50%;">LICENSE</div>
<div style="position:absolute;left:53.7px;top:467.0px;height:20px;line-height:20px;font-size:7.15px;color:#484848;white-space:nowrap;transform:scaleY(1.15);transform-origin:0 50%;">192.168.27.30</div>
<svg style="position:absolute;left:105.3px;top:472.1px" width="7.8" height="8.4" viewBox="0 0 10 10" preserveAspectRatio="none">
<defs><radialGradient id="g1" cx="0.45" cy="0.35" r="0.65"><stop offset="0" stop-color="#7ad858"/><stop offset="0.75" stop-color="#3e9e2a"/><stop offset="1" stop-color="#2f7f22"/></radialGradient></defs>
<circle cx="5" cy="5" r="4.8" fill="url(#g1)"/><path d="M2.5 5 L4.3 6.9 L7.5 3.5" fill="none" stroke="#b6f59a" stroke-width="1.7"/></svg>
<div style="position:absolute;left:116.9px;top:466.6px;height:20px;line-height:20px;font-size:7.4px;color:#333;white-space:nowrap;transform:scaleY(1.1);transform-origin:0 50%;">正常</div>
<div style="position:absolute;left:17.7px;top:485.3px;width:150px;height:0.9px;background:#e9e9e9"></div>
<div style="position:absolute;left:17.7px;top:486.2px;width:150px;height:0.6px;background:#fafafa"></div>
<div style="position:absolute;left:290.5px;top:445.6px;height:20px;line-height:20px;font-size:6.7px;color:#3a3a3a;white-space:nowrap;transform:scaleY(1.18);transform-origin:0 50%;">WI</div>
<div style="position:absolute;left:287.5px;top:459.6px;width:152px;height:0.9px;background:#e9e9e9"></div>
<div style="position:absolute;left:287.5px;top:460.5px;width:152px;height:0.6px;background:#fafafa"></div>
<div style="position:absolute;left:290.5px;top:467.0px;height:20px;line-height:20px;font-size:7.2px;color:#484848;white-space:nowrap;transform:scaleY(1.15);transform-origin:0 50%;">WI</div>
<div style="position:absolute;left:323.5px;top:467.0px;height:20px;line-height:20px;font-size:7.15px;color:#484848;white-space:nowrap;transform:scaleY(1.15);transform-origin:0 50%;">192.168.27.30</div>
<svg style="position:absolute;left:375.1px;top:472.1px" width="7.8" height="8.4" viewBox="0 0 10 10" preserveAspectRatio="none">
<defs><radialGradient id="g2" cx="0.45" cy="0.35" r="0.65"><stop offset="0" stop-color="#7ad858"/><stop offset="0.75" stop-color="#3e9e2a"/><stop offset="1" stop-color="#2f7f22"/></radialGradient></defs>
<circle cx="5" cy="5" r="4.8" fill="url(#g2)"/><path d="M2.5 5 L4.3 6.9 L7.5 3.5" fill="none" stroke="#b6f59a" stroke-width="1.7"/></svg>
<div style="position:absolute;left:386.7px;top:466.6px;height:20px;line-height:20px;font-size:7.4px;color:#333;white-space:nowrap;transform:scaleY(1.1);transform-origin:0 50%;">正常</div>
<div style="position:absolute;left:287.5px;top:485.3px;width:152px;height:0.9px;background:#e9e9e9"></div>
<div style="position:absolute;left:287.5px;top:486.2px;width:152px;height:0.6px;background:#fafafa"></div>
<div style="position:absolute;left:557.7px;top:445.6px;height:20px;line-height:20px;font-size:6.7px;color:#3a3a3a;white-space:nowrap;transform:scaleY(1.18);transform-origin:0 50%;">HDC</div>
<div style="position:absolute;left:554.7px;top:459.6px;width:152px;height:0.9px;background:#e9e9e9"></div>
<div style="position:absolute;left:554.7px;top:460.5px;width:152px;height:0.6px;background:#fafafa"></div>
<div style="position:absolute;left:557.7px;top:467.0px;height:20px;line-height:20px;font-size:7.2px;color:#484848;white-space:nowrap;transform:scaleY(1.15);transform-origin:0 50%;">HDC</div>
<div style="position:absolute;left:590.7px;top:467.0px;height:20px;line-height:20px;font-size:7.15px;color:#484848;white-space:nowrap;transform:scaleY(1.15);transform-origin:0 50%;">192.168.27.30</div>
<svg style="position:absolute;left:642.3000000000001px;top:472.1px" width="7.8" height="8.4" viewBox="0 0 10 10" preserveAspectRatio="none">
<defs><radialGradient id="g3" cx="0.45" cy="0.35" r="0.65"><stop offset="0" stop-color="#7ad858"/><stop offset="0.75" stop-color="#3e9e2a"/><stop offset="1" stop-color="#2f7f22"/></radialGradient></defs>
<circle cx="5" cy="5" r="4.8" fill="url(#g3)"/><path d="M2.5 5 L4.3 6.9 L7.5 3.5" fill="none" stroke="#b6f59a" stroke-width="1.7"/></svg>
<div style="position:absolute;left:653.9000000000001px;top:466.6px;height:20px;line-height:20px;font-size:7.4px;color:#333;white-space:nowrap;transform:scaleY(1.1);transform-origin:0 50%;">正常</div>
<div style="position:absolute;left:554.7px;top:485.3px;width:152px;height:0.9px;background:#e9e9e9"></div>
<div style="position:absolute;left:554.7px;top:486.2px;width:152px;height:0.6px;background:#fafafa"></div>
<div style="position:absolute;left:825.1px;top:445.6px;height:20px;line-height:20px;font-size:6.7px;color:#3a3a3a;white-space:nowrap;transform:scaleY(1.18);transform-origin:0 50%;">DB</div>
<div style="position:absolute;left:822.1px;top:459.6px;width:152px;height:0.9px;background:#e9e9e9"></div>
<div style="position:absolute;left:822.1px;top:460.5px;width:152px;height:0.6px;background:#fafafa"></div>
<div style="position:absolute;left:825.1px;top:467.0px;height:20px;line-height:20px;font-size:7.2px;color:#484848;white-space:nowrap;transform:scaleY(1.15);transform-origin:0 50%;">DB</div>
<div style="position:absolute;left:858.1px;top:467.0px;height:20px;line-height:20px;font-size:7.15px;color:#484848;white-space:nowrap;transform:scaleY(1.15);transform-origin:0 50%;">192.168.27.30</div>
<svg style="position:absolute;left:909.7px;top:472.1px" width="7.8" height="8.4" viewBox="0 0 10 10" preserveAspectRatio="none">
<defs><radialGradient id="g4" cx="0.45" cy="0.35" r="0.65"><stop offset="0" stop-color="#7ad858"/><stop offset="0.75" stop-color="#3e9e2a"/><stop offset="1" stop-color="#2f7f22"/></radialGradient></defs>
<circle cx="5" cy="5" r="4.8" fill="url(#g4)"/><path d="M2.5 5 L4.3 6.9 L7.5 3.5" fill="none" stroke="#b6f59a" stroke-width="1.7"/></svg>
<div style="position:absolute;left:921.3000000000001px;top:466.6px;height:20px;line-height:20px;font-size:7.4px;color:#333;white-space:nowrap;transform:scaleY(1.1);transform-origin:0 50%;">正常</div>
<div style="position:absolute;left:822.1px;top:485.3px;width:152px;height:0.9px;background:#e9e9e9"></div>
<div style="position:absolute;left:822.1px;top:486.2px;width:152px;height:0.6px;background:#fafafa"></div>
<div style="position:absolute;left:20.7px;top:499.0px;height:20px;line-height:20px;font-size:6.7px;color:#3a3a3a;white-space:nowrap;transform:scaleY(1.18);transform-origin:0 50%;">ITA</div>
<div style="position:absolute;left:17.7px;top:514.4px;width:150px;height:0.9px;background:#e9e9e9"></div>
<div style="position:absolute;left:17.7px;top:515.3px;width:150px;height:0.6px;background:#fafafa"></div>
<div style="position:absolute;left:20.7px;top:520.7px;height:20px;line-height:20px;font-size:7.2px;color:#484848;white-space:nowrap;transform:scaleY(1.15);transform-origin:0 50%;">ITA</div>
<div style="position:absolute;left:53.7px;top:520.7px;height:20px;line-height:20px;font-size:7.15px;color:#484848;white-space:nowrap;transform:scaleY(1.15);transform-origin:0 50%;">192.168.27.30</div>
<svg style="position:absolute;left:105.3px;top:525.8000000000001px" width="7.8" height="8.4" viewBox="0 0 10 10" preserveAspectRatio="none">
<defs><radialGradient id="g5" cx="0.45" cy="0.35" r="0.65"><stop offset="0" stop-color="#7ad858"/><stop offset="0.75" stop-color="#3e9e2a"/><stop offset="1" stop-color="#2f7f22"/></radialGradient></defs>
<circle cx="5" cy="5" r="4.8" fill="url(#g5)"/><path d="M2.5 5 L4.3 6.9 L7.5 3.5" fill="none" stroke="#b6f59a" stroke-width="1.7"/></svg>
<div style="position:absolute;left:116.9px;top:520.3000000000001px;height:20px;line-height:20px;font-size:7.4px;color:#333;white-space:nowrap;transform:scaleY(1.1);transform-origin:0 50%;">正常</div>
<div style="position:absolute;left:17.7px;top:539.8px;width:150px;height:0.9px;background:#e9e9e9"></div>
<div style="position:absolute;left:17.7px;top:540.6999999999999px;width:150px;height:0.6px;background:#fafafa"></div>
</div></body></html>
